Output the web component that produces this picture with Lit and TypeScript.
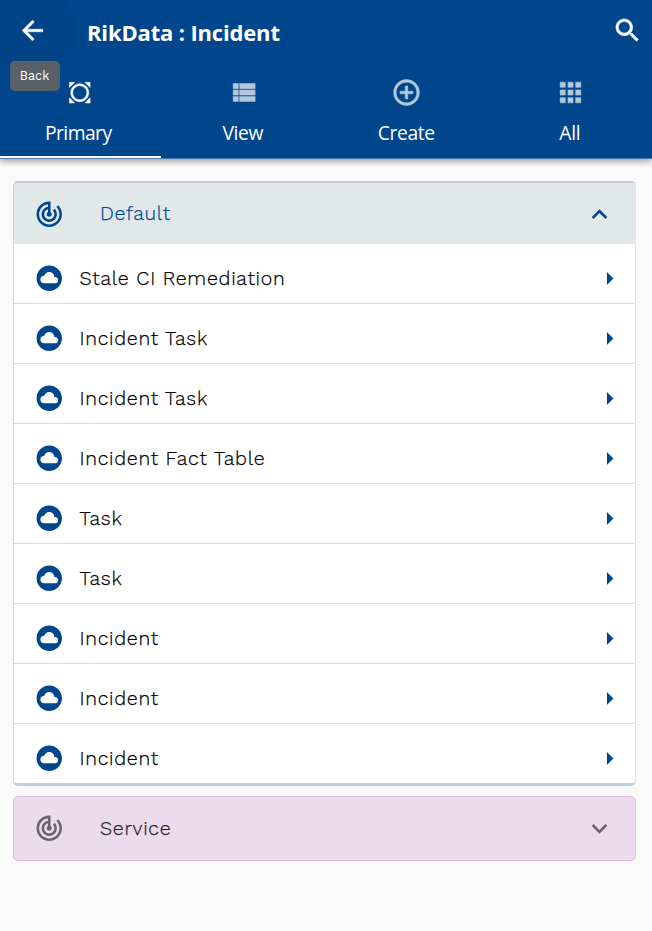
import { LitElement, html, css } from "lit";
import { customElement, property } from "lit/decorators.js";

const ICONS: Record<string, string> = {
  back: "M20 11H7.83l5.59-5.59L12 4l-8 8 8 8 1.41-1.41L7.83 13H20v-2z",
  search: "M15.5 14h-.79l-.28-.27C15.41 12.59 16 11.11 16 9.5 16 5.91 13.09 3 9.5 3S3 5.91 3 9.5 5.91 16 9.5 16c1.61 0 3.09-.59 4.23-1.57l.27.28v.79l5 4.99L20.49 19l-4.99-5zm-6 0C7.01 14 5 11.99 5 9.5S7.01 5 9.5 5 14 7.01 14 9.5 11.99 14 9.5 14z",
  allOut: "M16.21 4.16l4 4v-4zm4 12l-4 4h4zm-12 4l-4-4v4zm-4-12l4-4h-4zm12.95-.95c-2.73-2.73-7.17-2.73-9.9 0s-2.73 7.17 0 9.9 7.17 2.73 9.9 0 2.73-7.16 0-9.9zm-1.1 8.8c-2.13 2.13-5.57 2.13-7.7 0s-2.13-5.57 0-7.7 5.57-2.13 7.7 0 2.13 5.57 0 7.7z",
  list: "M4 14h4v-4H4v4zm0 5h4v-4H4v4zM4 9h4V5H4v4zm5 5h12v-4H9v4zm0 5h12v-4H9v4zM9 5v4h12V5H9z",
  add: "M13 7h-2v4H7v2h4v4h2v-4h4v-2h-4V7zm-1-5C6.48 2 2 6.48 2 12s4.48 10 10 10 10-4.48 10-10S17.52 2 12 2zm0 18c-4.41 0-8-3.59-8-8s3.59-8 8-8 8 3.59 8 8-3.59 8-8 8z",
  apps: "M4 8h4V4H4v4zm6 12h4v-4h-4v4zm-6 0h4v-4H4v4zm0-6h4v-4H4v4zm6 0h4v-4h-4v4zm6-10v4h4V4h-4zm-6 4h4V4h-4v4zm6 6h4v-4h-4v4zm0 6h4v-4h-4v4z",
  track: "M19.07 4.93l-1.41 1.41C19.1 7.79 20 9.79 20 12c0 4.42-3.58 8-8 8s-8-3.58-8-8c0-4.08 3.05-7.44 7-7.93v2.02C8.16 6.57 6 9.03 6 12c0 3.31 2.69 6 6 6s6-2.69 6-6c0-1.66-.67-3.16-1.76-4.24l-1.41 1.41C15.55 9.9 16 10.9 16 12c0 2.21-1.79 4-4 4s-4-1.79-4-4c0-1.86 1.28-3.41 3-3.86v2.14c-.6.35-1 .98-1 1.72 0 1.1.9 2 2 2s2-.9 2-2c0-.74-.4-1.38-1-1.72V2h-1C6.48 2 2 6.48 2 12s4.48 10 10 10 10-4.48 10-10c0-2.76-1.12-5.26-2.93-7.07z",
  cloud: "M12 2C6.48 2 2 6.48 2 12s4.48 10 10 10 10-4.48 10-10S17.52 2 12 2zm4.5 14H8c-1.66 0-3-1.34-3-3s1.34-3 3-3l.14.01C8.58 8.28 10.13 7 12 7c2.21 0 4 1.79 4 4h.5c1.38 0 2.5 1.12 2.5 2.5S17.88 16 16.5 16z",
  less: "M12 8l-6 6 1.41 1.41L12 10.83l4.59 4.58L18 14z",
  more: "M16.59 8.59L12 13.17 7.41 8.59 6 10l6 6 6-6z",
  right: "M10 17l5-5-5-5v10z",
};

@customElement("md-icon")
class MdIcon extends LitElement {
  @property() name = "";
  static styles = css`
    :host { display: block; flex: none; width: 31px; height: 31px; }
    svg { display: block; width: 100%; height: 100%; fill: currentColor; stroke: currentColor; stroke-width: var(--weight, 0); }
  `;
  render() {
    return html`<svg viewBox="0 0 24 24"><path d=${ICONS[this.name]}></path></svg>`;
  }
}

const TABS = [
  { icon: "allOut", label: "Primary", active: true },
  { icon: "list", label: "View" },
  { icon: "add", label: "Create" },
  { icon: "apps", label: "All" },
];

const ROWS = [
  "Stale CI Remediation", "Incident Task", "Incident Task", "Incident Fact Table",
  "Task", "Task", "Incident", "Incident", "Incident",
];

@customElement("app-root")
class AppRoot extends LitElement {
  static styles = css`
    :host {
      display: block; position: relative; height: 931px; overflow: hidden;
      background: #fafafa; color: #111; box-sizing: border-box;
      font-family: "Work Sans", Inter, "Noto Sans", sans-serif;
    }
    * { box-sizing: border-box; }
    header {
      position: relative; height: 159px; overflow: hidden; color: #fff;
      background: #00468c; border-bottom: 1px solid #4d7cac;
      font-family: "Segoe UI", "Open Sans", "Noto Sans", sans-serif;
      --weight: 0.4;
    }
    .shade { box-shadow: 0 2px 7px rgba(0, 0, 0, 0.42); }
    .ripple {
      position: absolute; left: -12px; top: -13px; width: 88px; height: 88px;
      border-radius: 50%; background: rgba(0, 0, 0, 0.035);
    }
    .bar { position: relative; display: flex; align-items: center; height: 64px; padding: 0 9.5px 3px 17px; }
    .title { flex: 1; margin: 3px 0 0 39px; font-size: 22px; line-height: 30px; font-weight: 700; letter-spacing: -0.16px; }
    .tabs { display: flex; height: 94px; margin-left: -2.5px; width: 654px; }
    .tab { width: 163.5px; flex: none; display: flex; flex-direction: column; align-items: center; padding-top: 12.5px; }
    .tab md-icon { opacity: 0.7; position: relative; left: 0.5px; }
    .tab.active md-icon { opacity: 1; left: 0; }
    .tab span { margin-top: 12.5px; font-size: 19.3px; line-height: 26px; letter-spacing: -0.35px; }
    .tab.active span { letter-spacing: -0.55px; margin-left: -2px; }
    .tab.active { box-shadow: inset 0 -2px #fff; }
    .tip {
      position: absolute; left: 9.5px; top: 61px; width: 50px; height: 30px;
      border-radius: 5px; background: #5a6067; color: #fff; text-align: center;
      font-size: 12.5px; line-height: 29px; letter-spacing: 0.1px;
    }
    main { padding: 22px 16.5px 0 13px; display: flex; flex-direction: column; gap: 10px; }
    .panel {
      height: 605px; border: 1px solid #cbd5d9; border-top: 2px solid #c5cbd0;
      border-bottom: 3px solid #c5d0d3; border-radius: 5px; background: #fff; overflow: hidden;
      border-right-color: #dfe5e8;
    }
    .head { display: flex; align-items: center; height: 61px; background: #e2e8ea; color: #00468c; padding: 1px 20px 0 20px; }
    .name { flex: 1; margin-left: 35.5px; font-size: 19.6px; line-height: 28px; font-weight: 300; letter-spacing: 0.72px; -webkit-text-stroke: 0.25px currentColor; }
    .head md-icon:first-child, .row md-icon:first-child, .service md-icon:first-child { width: 30.5px; height: 30.5px; }
    .head .name { margin-top: -1px; }
    .row { display: flex; align-items: center; height: 60px; padding: 9px 9.5px 0 20px; border-bottom: 1px solid #dcdfe0; }
    .row:last-child { border-bottom: 0; height: 59px; }
    .row md-icon { color: #00468c; }
    .row .name { margin: 1px 0 0 15px; color: #000; }
    .service {
      height: 65px; border: 1px solid #dfbce6; border-radius: 5px; background: #ecdaed;
      color: #222; display: flex; align-items: center; padding: 0 20px 0 20px;
    }
    .service md-icon { color: #6b626b; }
    .head md-icon:last-child, .service md-icon:last-child { margin-right: -0.5px; }
  `;
  render() {
    return html`
      <div class="shade"><header>
        <div class="ripple"></div>
        <div class="bar">
          <md-icon name="back"></md-icon>
          <div class="title">RikData : Incident</div>
          <md-icon name="search"></md-icon>
        </div>
        <div class="tabs">
          ${TABS.map((t) => html`<div class="tab ${t.active ? "active" : ""}">
            <md-icon name=${t.icon}></md-icon><span>${t.label}</span>
          </div>`)}
        </div>
      </header></div>
      <div class="tip">Back</div>
      <main>
        <section class="panel">
          <div class="head"><md-icon name="track"></md-icon><span class="name">Default</span><md-icon name="less"></md-icon></div>
          ${ROWS.map((r) => html`<div class="row">
            <md-icon name="cloud"></md-icon><span class="name">${r}</span><md-icon name="right"></md-icon>
          </div>`)}
        </section>
        <section class="service"><md-icon name="track"></md-icon><span class="name">Service</span><md-icon name="more"></md-icon></section>
      </main>`;
  }
}
